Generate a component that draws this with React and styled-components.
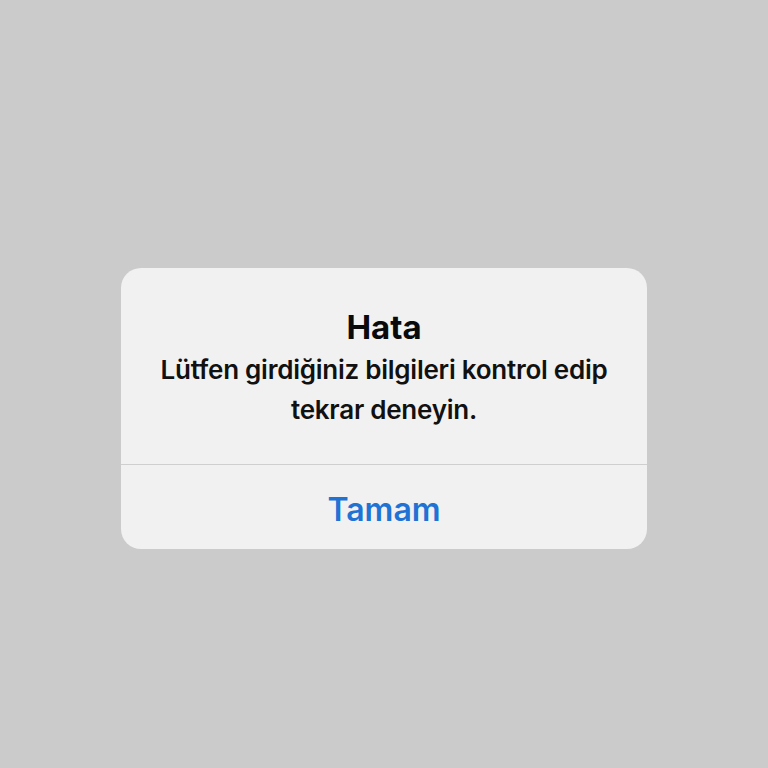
import React from "react";
import styled, { createGlobalStyle } from "styled-components";

const Global = createGlobalStyle`
  html, body { margin: 0; padding: 0; background: #cbcbcb; }
  body { font-family: Inter, "Noto Sans", "Liberation Sans", sans-serif; }
`;

const Screen = styled.div`
  width: 768px;
  height: 768px;
  display: flex;
  align-items: flex-start;
  justify-content: center;
  padding-top: 268px;
  box-sizing: border-box;
  background: #cbcbcb;
`;

const Alert = styled.div`
  width: 526px;
  background: #f1f1f1;
  border-radius: 20px;
  display: flex;
  flex-direction: column;
  overflow: hidden;
`;

const Body = styled.div`
  padding: 39px 16px 0;
  display: flex;
  flex-direction: column;
  align-items: center;
  text-align: center;
  height: 196px;
  box-sizing: border-box;
`;

const Title = styled.div`
  font-size: 33px;
  font-weight: 700;
  color: #0a0a0a;
  line-height: 40px;
`;

const Message = styled.div`
  margin-top: 3px;
  font-size: 26px;
  font-weight: 600;
  color: #111;
  line-height: 40px;
  letter-spacing: -0.25px;
`;

const Divider = styled.div`
  height: 1px;
  background: #cfcfcf;
`;

const Button = styled.button`
  height: 84px;
  border: none;
  background: transparent;
  font-family: inherit;
  font-size: 32px;
  font-weight: 600;
  line-height: 40px;
  color: #1f73d4;
  padding: 6px 0 0;
`;

export default function App() {
  return (
    <>
      <Global />
      <Screen>
        <Alert>
          <Body>
            <Title>Hata</Title>
            <Message>
              Lütfen girdiğiniz bilgileri kontrol edip
              <br />
              tekrar deneyin.
            </Message>
          </Body>
          <Divider />
          <Button>Tamam</Button>
        </Alert>
      </Screen>
    </>
  );
}
